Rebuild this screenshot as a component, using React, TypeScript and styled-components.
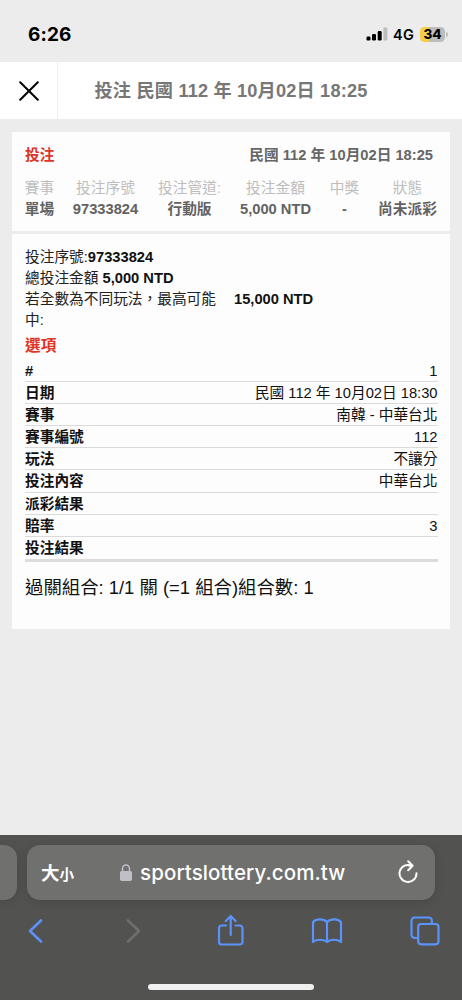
import React from 'react';
import styled, { createGlobalStyle } from 'styled-components';

const Global = createGlobalStyle`
  * { box-sizing: border-box; }
  body { margin: 0; background: #ececec; }
`;

const Screen = styled.div`
  width: 462px;
  height: 1000px;
  display: flex;
  flex-direction: column;
  overflow: hidden;
  background: #ececec;
  color: #111;
  font-family: 'Liberation Sans', 'Noto Sans CJK TC', sans-serif;
  font-size: 14.7px;
  white-space: nowrap;
`;

const StatusBar = styled.div`
  height: 61.5px;
  flex: none;
  display: flex;
  align-items: center;
  padding: 6.5px 14px 0 28px;
  font-family: Inter, sans-serif;
  color: #000;
`;

const Clock = styled.div`
  flex: 1;
  font-size: 19px;
  font-weight: 700;
  letter-spacing: 0.15px;
`;

const Network = styled.span`
  margin: 0 6px 0 5px;
  font-size: 14.5px;
  font-weight: 600;
  letter-spacing: 0.2px;
`;

const Battery = styled.div`
  width: 25px;
  height: 15px;
  border-radius: 4.5px;
  background: linear-gradient(90deg, #f7cd46 34%, #bdbdbd 34%);
  font-size: 13.5px;
  line-height: 15px;
  font-weight: 800;
  text-align: center;
`;

const BatteryCap = styled.div`
  width: 2px;
  height: 5px;
  margin-left: 1px;
  border-radius: 0 2px 2px 0;
  background: #c0c0c0;
`;

const TitleBar = styled.header`
  height: 57px;
  flex: none;
  display: flex;
  background: #fff;
`;

const CloseButton = styled.div`
  width: 58px;
  display: flex;
  align-items: center;
  justify-content: center;
  padding-top: 1px;
  border-right: 1px solid #eee;
`;

const Title = styled.h1`
  margin: 0;
  padding: 0 0 0 36.5px;
  font-size: 18.2px;
  line-height: 58px;
  letter-spacing: 0.17px;
  font-weight: 700;
  color: #777;
`;

const Content = styled.main`
  flex: 1;
  padding: 13.5px 12px 0;
  display: flex;
  flex-direction: column;
  gap: 3px;
`;

const Card = styled.section<{ $height: number }>`
  height: ${(p) => p.$height}px;
  padding-left: 13px;
  background: #fdfdfd;
`;

const CardHead = styled.div`
  display: flex;
  justify-content: space-between;
  padding: 12px 17px 0 0;
  line-height: 22px;
  font-weight: 700;
  color: #666;
`;

const Accent = styled.span`
  color: #e03426;
`;

const Summary = styled.div`
  display: grid;
  grid-template-columns: 29px 103px 65px 107px 31px 90px;
  padding-top: 12px;
`;

const SummaryItem = styled.div`
  display: flex;
  flex-direction: column;
  align-items: center;
  line-height: 21px;
  &:last-child { padding-left: 5px; }
`;

const Label = styled.span`
  color: #bdbdbd;
`;

const Value = styled.span`
  color: #626262;
  font-weight: 700;
`;

const Info = styled.div`
  padding-top: 13px;
  line-height: 21px;
  color: #222;
`;

const InfoLine = styled.div`
  display: flex;
`;

const InfoLabel = styled.span<{ $wide?: boolean }>`
  width: ${(p) => (p.$wide ? '209px' : 'auto')};
`;

const Strong = styled.b`
  color: #111;
`;

const Subheading = styled.h2`
  margin: 0;
  padding: 3px 0 1.7px;
  font-size: 15.7px;
  line-height: 24px;
  color: #e03426;
`;

const Details = styled.dl`
  width: 412.5px;
  margin: 0;
  border-bottom: 3px solid #dcdcdc;
`;

const DetailRow = styled.div`
  height: 22.16px;
  display: flex;
  justify-content: space-between;
  border-bottom: 1px solid #dadada;
  line-height: 22px;
  &:last-child { border-bottom: 0; }
`;

const Term = styled.dt`
  font-weight: 700;
  color: #111;
`;

const Detail = styled.dd`
  margin: 0;
`;

const Combination = styled.p`
  margin: 11.5px 0 0;
  font-size: 18.4px;
  line-height: 28px;
`;

const Browser = styled.footer`
  height: 165px;
  flex: none;
  display: flex;
  flex-direction: column;
  background: #525250;
`;

const Tabs = styled.div`
  display: flex;
  gap: 10px;
  padding-top: 10px;
`;

const PreviousTab = styled.div`
  width: 17px;
  height: 55px;
  border-radius: 0 13px 13px 0;
  background: #70706e;
  box-shadow: 0 2px 10px rgba(0, 0, 0, 0.14);
`;

const AddressBar = styled.div`
  width: 408px;
  height: 55px;
  display: flex;
  align-items: center;
  padding: 0 16px 0 14px;
  border-radius: 13px;
  background: #70706e;
  box-shadow: 0 2px 10px rgba(0, 0, 0, 0.14);
  color: #fff;
`;

const TextSize = styled.div`
  display: flex;
  align-items: baseline;
  width: 79px;
  padding-bottom: 2px;
  font-family: 'Noto Sans CJK TC', sans-serif;
  font-size: 18.5px;
  font-weight: 700;
`;

const Small = styled.span`
  font-size: 14.5px;
`;

const Domain = styled.div`
  flex: 1;
  padding-left: 8px;
  font-family: Inter, sans-serif;
  font-size: 20.5px;
  font-weight: 500;
  letter-spacing: 0.1px;
`;

const Toolbar = styled.nav`
  height: 62px;
  display: flex;
  align-items: center;
  justify-content: space-between;
  padding: 0 22px 0 21px;
`;

const HomeIndicator = styled.div`
  width: 166px;
  height: 6px;
  margin: 22px auto 0;
  border-radius: 3px;
  background: #f0f0f0;
`;

const summary = [
  ['賽事', '單場'],
  ['投注序號', '97333824'],
  ['投注管道:', '行動版'],
  ['投注金額', '5,000 NTD'],
  ['中獎', '-'],
  ['狀態', '尚未派彩'],
];

const details = [
  ['#', '1'],
  ['日期', '民國 112 年 10月02日 18:30'],
  ['賽事', '南韓 - 中華台北'],
  ['賽事編號', '112'],
  ['玩法', '不讓分'],
  ['投注內容', '中華台北'],
  ['派彩結果', ''],
  ['賠率', '3'],
  ['投注結果', ''],
];

const Stroke = styled.svg<{ $color: string; $weight?: number }>`
  display: block;
  flex: none;
  fill: none;
  stroke: ${(p) => p.$color};
  stroke-width: ${(p) => p.$weight ?? 2.2};
  stroke-linecap: round;
  stroke-linejoin: round;
`;

const BLUE = '#5b93fb';

export default function App() {
  return (
    <Screen>
      <Global />
      <StatusBar>
        <Clock>6:26</Clock>
        <svg width="22" height="14" viewBox="0 0 22 14">
          <rect x="0.5" y="9.5" width="4" height="4" rx="1.2" />
          <rect x="6" y="7" width="4" height="6.5" rx="1.2" />
          <rect x="11.7" y="4" width="4" height="9.5" rx="1.2" />
          <rect x="17.4" y="0.5" width="4" height="13" rx="1.2" fill="#bebebe" />
        </svg>
        <Network>4G</Network>
        <Battery>34</Battery>
        <BatteryCap />
      </StatusBar>

      <TitleBar>
        <CloseButton>
          <Stroke $color="#000" $weight={2} width="20" height="20" viewBox="0 0 20 20">
            <path d="M1.2 1.2 18.8 18.8M18.8 1.2 1.2 18.8" />
          </Stroke>
        </CloseButton>
        <Title>投注 民國 112 年 10月02日 18:25</Title>
      </TitleBar>

      <Content>
        <Card $height={99}>
          <CardHead>
            <Accent>投注</Accent>
            <span>民國 112 年 10月02日 18:25</span>
          </CardHead>
          <Summary>
            {summary.map(([label, value]) => (
              <SummaryItem key={label}>
                <Label>{label}</Label>
                <Value>{value}</Value>
              </SummaryItem>
            ))}
          </Summary>
        </Card>

        <Card $height={394.5}>
          <Info>
            <InfoLine>投注序號:<Strong>97333824</Strong></InfoLine>
            <InfoLine><InfoLabel>總投注金額&nbsp;</InfoLabel><Strong>5,000 NTD</Strong></InfoLine>
            <InfoLine>
              <InfoLabel $wide>若全數為不同玩法，最高可能<br />中:</InfoLabel>
              <Strong>15,000 NTD</Strong>
            </InfoLine>
          </Info>
          <Subheading>選項</Subheading>
          <Details>
            {details.map(([term, detail]) => (
              <DetailRow key={term}>
                <Term>{term}</Term>
                <Detail>{detail}</Detail>
              </DetailRow>
            ))}
          </Details>
          <Combination>過關組合: 1/1 關 (=1 組合)組合數: 1</Combination>
        </Card>
      </Content>

      <Browser>
        <Tabs>
          <PreviousTab />
          <AddressBar>
            <TextSize>大<Small>小</Small></TextSize>
            <svg width="12" height="18" viewBox="0 0 12 18">
              <rect x="0" y="7" width="12" height="10" rx="1.8" fill="#c0bfc6" />
              <path d="M2.5 8V4.5a3.5 3.5 0 0 1 7 0V8" fill="none" stroke="#c0bfc6" strokeWidth="1.5" />
            </svg>
            <Domain>sportslottery.com.tw</Domain>
            <Stroke $color="#fff" $weight={2} width="22" height="26" viewBox="0 0 22 26">
              <path d="M14.7 5.8A8.5 8.5 0 1 0 19.5 13.2M11.2 1.2l4.4 4.5-4.4 4.5M15 5.7H12" />
            </Stroke>
          </AddressBar>
        </Tabs>
        <Toolbar>
          <Stroke $color={BLUE} $weight={2.6} width="30" height="30" viewBox="0 0 30 30">
            <path d="M20 4.5 9 15l11 10.5" />
          </Stroke>
          <Stroke $color="#6e6e6d" $weight={2.6} width="30" height="30" viewBox="0 0 30 30">
            <path d="M10 4.5 21 15 10 25.5" />
          </Stroke>
          <Stroke $color={BLUE} width="30" height="34" viewBox="0 0 30 34">
            <path d="M11 11.5H6.8A2.8 2.8 0 0 0 4 14.3v13.4a2.8 2.8 0 0 0 2.8 2.8h17.9a2.8 2.8 0 0 0 2.8-2.8V14.3a2.8 2.8 0 0 0-2.8-2.8H20.5M15.7 21V2.3M10.8 7 15.7 2l4.9 5" />
          </Stroke>
          <Stroke $color={BLUE} width="32" height="28" viewBox="0 0 32 28">
            <path d="M16 5.3C12.8 1.5 5 1.5 2 5.3V25c3-3 11-3 14 0 3-3 11-3 14 0V5.3C27 1.5 19.2 1.5 16 5.3V25" />
          </Stroke>
          <Stroke $color={BLUE} width="30" height="30" viewBox="0 0 30 30">
            <path d="M7.5 22H4.7A3.2 3.2 0 0 1 1.5 18.8V4.7A3.2 3.2 0 0 1 4.7 1.5h14A3.2 3.2 0 0 1 21.9 4.7V7.7" />
            <rect x="8.2" y="8" width="20.3" height="20.3" rx="3" />
          </Stroke>
        </Toolbar>
        <HomeIndicator />
      </Browser>
    </Screen>
  );
}
